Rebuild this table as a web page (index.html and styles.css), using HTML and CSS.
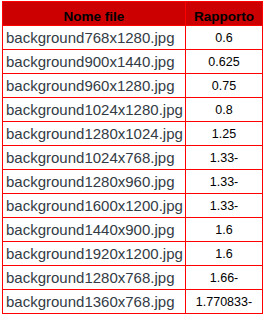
FILE: index.html
```html
<!DOCTYPE html>
<html>
<head>
<meta charset="utf-8">
<link rel="stylesheet" href="styles.css">
</head>
<body>
<table class="grid">
  <thead>
    <tr><th class="name">Nome file</th><th class="ratio">Rapporto</th></tr>
  </thead>
  <tbody>
    <tr><td class="name">background768x1280.jpg</td><td class="ratio">0.6</td></tr>
    <tr><td class="name">background900x1440.jpg</td><td class="ratio">0.625</td></tr>
    <tr><td class="name">background960x1280.jpg</td><td class="ratio">0.75</td></tr>
    <tr><td class="name">background1024x1280.jpg</td><td class="ratio">0.8</td></tr>
    <tr><td class="name">background1280x1024.jpg</td><td class="ratio">1.25</td></tr>
    <tr><td class="name">background1024x768.jpg</td><td class="ratio">1.33-</td></tr>
    <tr><td class="name">background1280x960.jpg</td><td class="ratio">1.33-</td></tr>
    <tr><td class="name">background1600x1200.jpg</td><td class="ratio">1.33-</td></tr>
    <tr><td class="name">background1440x900.jpg</td><td class="ratio">1.6</td></tr>
    <tr><td class="name">background1920x1200.jpg</td><td class="ratio">1.6</td></tr>
    <tr><td class="name">background1280x768.jpg</td><td class="ratio">1.66-</td></tr>
    <tr><td class="name">background1360x768.jpg</td><td class="ratio">1.770833-</td></tr>
  </tbody>
</table>
</body>
</html>
```
FILE: styles.css
```css
html, body {
  margin: 0;
  padding: 0;
  background: #ffffff;
}
body {
  padding: 1px 0 0 2px;
}
.grid {
  border-collapse: collapse;
  table-layout: fixed;
  width: 260px;
  font-family: "Liberation Sans", Arial, sans-serif;
}
.grid th, .grid td {
  border: 1px solid #ff0000;
  height: 24px;
  padding: 0;
  box-sizing: border-box;
}
.grid th {
  background: #cc0000;
  color: #000000;
  font-weight: bold;
  font-size: 13.5px;
  text-align: center;
  padding-top: 5px;
}
.grid th.name { width: 183px; }
.grid th.ratio { width: 77px; }
.grid td.name {
  font-size: 15px;
  color: #333b45;
  padding-left: 3px;
  text-align: left;
}
.grid td.ratio {
  font-size: 12.5px;
  color: #000000;
  text-align: center;
}
```
